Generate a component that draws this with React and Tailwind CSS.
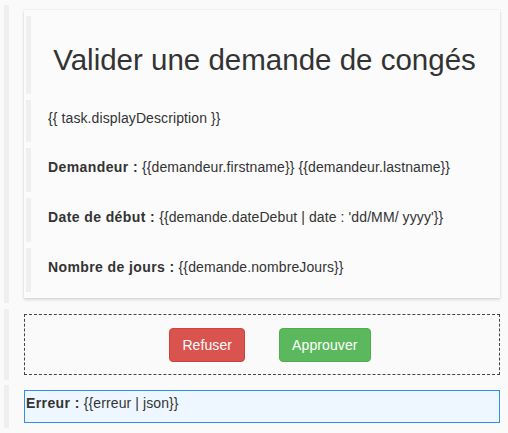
import React from 'react'

const fields = [
  { label: 'Demandeur :', value: '{{demandeur.firstname}} {{demandeur.lastname}}' },
  { label: 'Date de début :', value: "{{demande.dateDebut | date : 'dd/MM/ yyyy'}}" },
  { label: 'Nombre de jours :', value: '{{demande.nombreJours}}' },
]

function Section({ children, className = '' }) {
  return (
    <div className={`ml-[4px] mr-[8px] border-l-[5px] border-[#efefef] py-[5px] pl-[15px] ${className}`}>
      {children}
    </div>
  )
}

function Row({ children, className = '' }) {
  return <div className={`flex border-l-[5px] border-[#efefef] ${className}`}>{children}</div>
}

export default function App() {
  return (
    <div className="flex min-h-[433px] flex-col bg-[#fafafa] pt-[5px] font-['Liberation_Sans',Arial,sans-serif] text-[14px] leading-[20px] tracking-[0.1px] text-[#333]">
      <Section>
        <div className="flex flex-col gap-[6px] bg-[#fbfbfb] px-[2px] py-[6px] shadow-[0_0_1px_rgba(0,0,0,0.2),0_2px_3px_rgba(0,0,0,0.12)]">
          <Row className="h-[78px] justify-center pt-[27px]">
            <h1 className="text-[29.5px] leading-[33px] tracking-normal">Valider une demande de congés</h1>
          </Row>
          <Row className="h-[42px] pl-[17px] pt-[8px]">
            <div>{'{{ task.displayDescription }}'}</div>
          </Row>
          {fields.map((f) => (
            <Row key={f.label} className="h-[44px] pl-[17px] pt-[9px]">
              <div>
                <b className="font-bold tracking-[0.4px]">{f.label}</b> {f.value}
              </div>
            </Row>
          ))}
        </div>
      </Section>
      <Section className="mt-[6px]">
        <div className="flex h-[61px] items-start justify-center border border-dashed border-[#444450] pt-[13px]">
          <button className="ml-4 h-[34px] rounded-[4px] border border-[#d43f3a] bg-[#d9534f] px-3 text-white">
            Refuser
          </button>
          <button className="ml-[34px] h-[34px] rounded-[4px] border border-[#4cae4c] bg-[#5cb85c] px-3 text-white">
            Approuver
          </button>
        </div>
      </Section>
      <Section className="mt-[5px]">
        <div className="h-[33px] border border-[#2f8ff0] bg-[#eef7ff] px-px pt-[2px]">
          <b className="font-bold tracking-[0.4px]">Erreur :</b> {'{{erreur | json}}'}
        </div>
      </Section>
    </div>
  )
}
